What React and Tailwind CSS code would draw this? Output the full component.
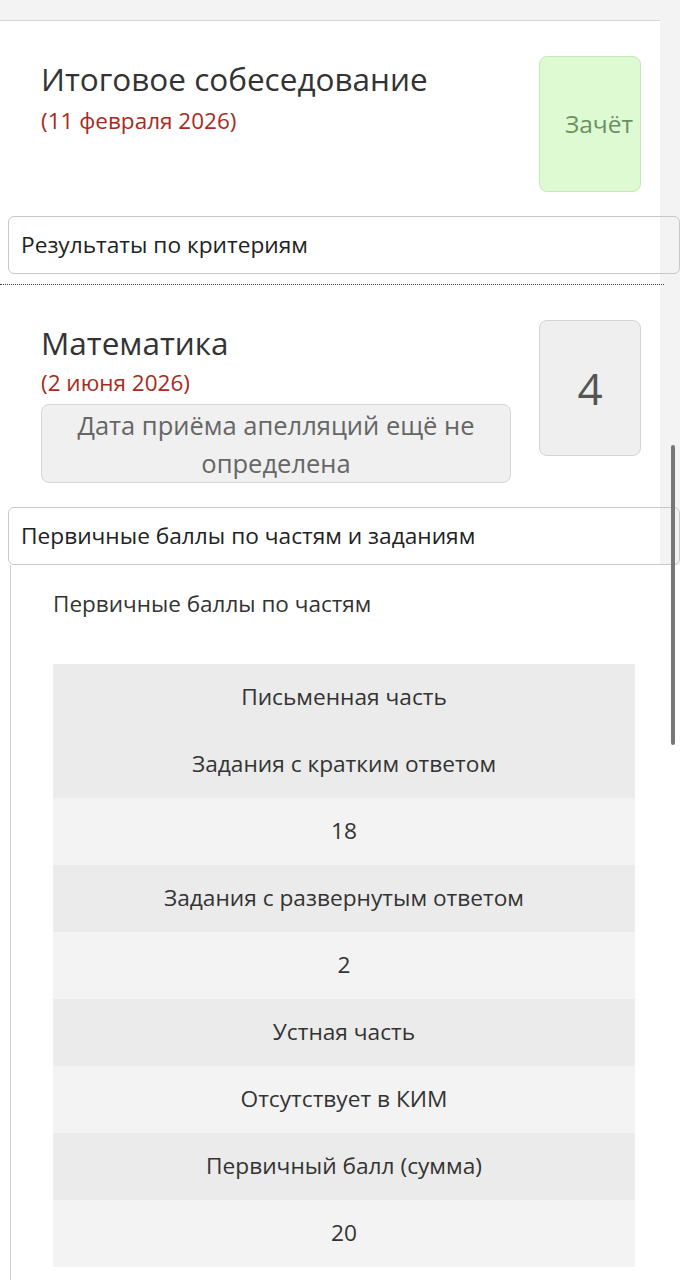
import React from "react";

const FONT = { fontFamily: "'Open Sans', 'Noto Sans', sans-serif" };

const exams = [
	{
		title: "Итоговое собеседование",
		date: "(11 февраля 2026)",
		mark: "Зачёт",
		passed: true,
		details: "Результаты по критериям",
	},
	{
		title: "Математика",
		date: "(2 июня 2026)",
		mark: "4",
		appeal: "Дата приёма апелляций ещё не определена",
		details: "Первичные баллы по частям и заданиям",
		open: true,
	},
];

const partRows = [
	{ text: "Письменная часть", tone: "dark" },
	{ text: "Задания с кратким ответом", tone: "dark" },
	{ text: "18", tone: "light" },
	{ text: "Задания с развернутым ответом", tone: "dark" },
	{ text: "2", tone: "light" },
	{ text: "Устная часть", tone: "dark" },
	{ text: "Отсутствует в КИМ", tone: "light" },
	{ text: "Первичный балл (сумма)", tone: "dark" },
	{ text: "20", tone: "light" },
];

const MarkBox = ({ mark, passed }) =>
	passed ? (
		<div className="w-[102px] h-[136px] shrink-0 rounded-lg border border-[#c9e7be] bg-[#ddfad3] flex items-center justify-end pr-[7px]">
			<span className="text-[24.5px] text-[#6b9160]">{mark}</span>
		</div>
	) : (
		<div className="w-[102px] h-[136px] shrink-0 rounded-lg border border-[#d3d3d3] bg-[#efefef] flex items-center justify-center">
			<span className="text-[44px] text-[#555]">{mark}</span>
		</div>
	);

const ExamHeader = ({ exam }) => (
	<div className="flex justify-between pl-[41px] pr-[19px] pt-[35px]">
		<div className="pt-[5px] flex flex-col">
			<p className="text-[31.5px] leading-[36px] text-[#333]">{exam.title}</p>
			<p
				className={`text-[22.5px] leading-[28px] text-[#a62b1c] ${
					exam.appeal ? "mt-[8px]" : "mt-[10px]"
				}`}>
				{exam.date}
			</p>
			{exam.appeal && (
				<div className="mt-[7px] w-[470px] h-[79px] rounded-lg border border-[#d5d5d5] bg-[#f0f0f0] flex items-center justify-center px-6 text-center">
					<p className="text-[25.5px] leading-[38px] text-[#666]">{exam.appeal}</p>
				</div>
			)}
		</div>
		<MarkBox mark={exam.mark} passed={exam.passed} />
	</div>
);

const DetailsToggle = ({ label }) => (
	<div className="ml-[8px] w-[672px] h-[58px] rounded-md border border-[#c8c8c8] flex items-center pl-[12px]">
		<span className="text-[22.7px] text-[#222]">{label}</span>
	</div>
);

const PartsTable = () => (
	<div className="ml-[10px] w-[680px] bg-white border-l border-[#d0d0d0] pl-[42px] pt-[25px] pb-[20px]">
		<p className="text-[22.5px] leading-[28px] text-[#333]">Первичные баллы по частям</p>
		<div className="mt-[46px] w-[582px] flex flex-col">
			{partRows.map((row, i) => (
				<div
					key={i}
					className={`h-[67px] flex items-center justify-center text-[22.7px] text-[#333] ${
						row.tone === "dark" ? "bg-[#ebebeb]" : "bg-[#f3f3f3]"
					}`}>
					{row.text}
				</div>
			))}
		</div>
	</div>
);

export default function App() {
	return (
		<div className="relative w-[680px] h-[1280px] overflow-hidden bg-[#f3f3f3]" style={FONT}>
			<div className="w-[660px] bg-white">
				{/* top strip */}
				<div className="h-[21px] bg-[#f3f3f3] border-b border-[#d6d6d6]" />

				<ExamHeader exam={exams[0]} />
				<div className="mt-[24px]">
					<DetailsToggle label={exams[0].details} />
				</div>
				<div className="mt-[10px] w-[664px] border-t border-dotted border-[#444]" />

				<ExamHeader exam={exams[1]} />
				<div className="mt-[24px]">
					<DetailsToggle label={exams[1].details} />
				</div>
				<PartsTable />
			</div>

			{/* scrollbar */}
			<div className="absolute left-[671px] top-[445px] w-[4px] h-[300px] rounded-full bg-[#777]" />
		</div>
	);
}
